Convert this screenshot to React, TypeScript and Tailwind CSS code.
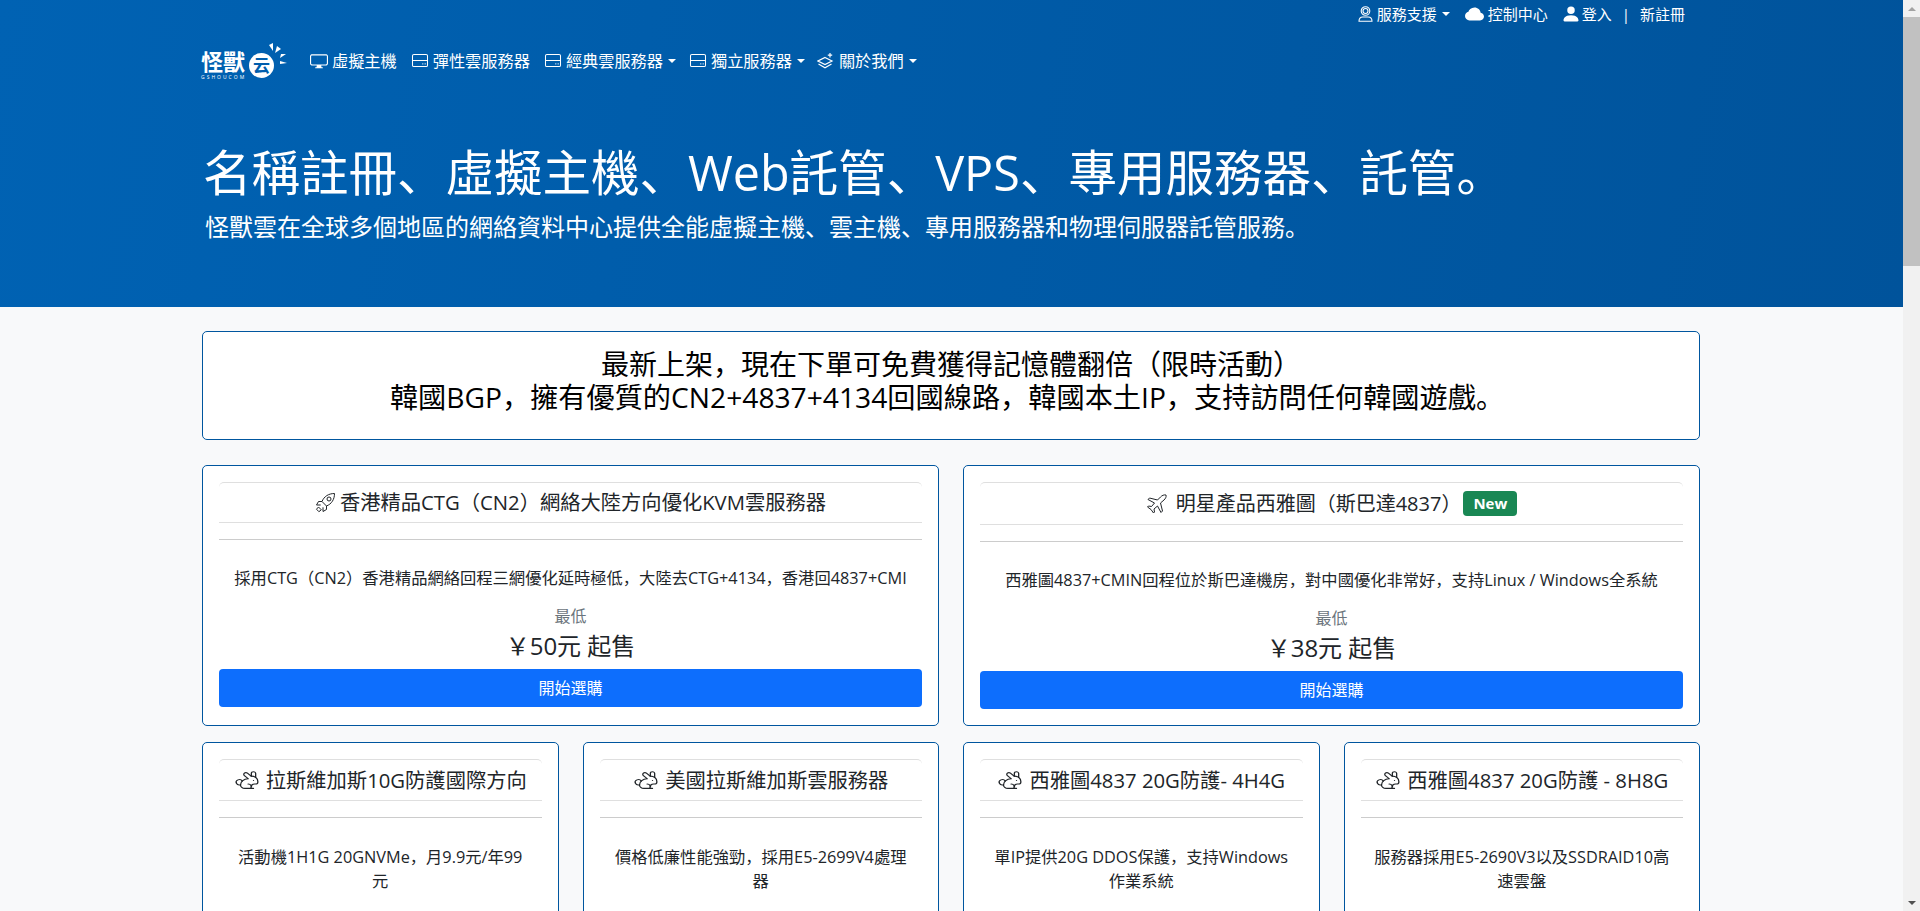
import React from "react";
import { BsDisplay, BsCloudFill, BsPersonFill } from "react-icons/bs";
import { Rabbit } from "lucide-react";

const FONT = "font-['Open_Sans','Noto_Sans_CJK_SC',sans-serif]";

function Caret() {
  return <span className="ml-[5px] inline-block h-0 w-0 border-x-[4px] border-t-[4px] border-x-transparent border-t-white" />;
}

function HddIcon() {
  return (
    <svg viewBox="0 0 18 16" className="h-[15px] w-[18px]" fill="none" stroke="currentColor" strokeWidth="1.1">
      <rect x="1" y="1.5" width="16" height="13" rx="1.5" />
      <path d="M1 8h16" />
      <path d="M11.5 11.5h1M14 11.5h1" strokeWidth="1.3" />
    </svg>
  );
}

function LayersIcon() {
  return (
    <svg viewBox="0 0 18 18" className="h-[18px] w-[18px]" fill="none" stroke="currentColor" strokeWidth="1.2">
      <path d="M8 5.5 15 9 8 12.5 1 9Z" />
      <path d="M1.5 12 8 15.8 14.5 12" />
      <path d="M13 1v4.5M10.8 3.2h4.4" />
    </svg>
  );
}

function SupportIcon() {
  return (
    <svg viewBox="0 0 15 16" className="h-[16px] w-[15px]" fill="none" stroke="currentColor" strokeWidth="1.1">
      <circle cx="7.5" cy="5" r="4.3" />
      <circle cx="7.5" cy="5" r="2.5" />
      <path d="M1 15.3c0-3 1.8-4.3 3.8-4.3h5.4c2 0 3.8 1.3 3.8 4.3Z" />
    </svg>
  );
}

function RocketIcon() {
  return (
    <svg viewBox="0 0 21 21" className="h-[21px] w-[21px]" fill="none" stroke="currentColor" strokeWidth="1" strokeLinejoin="round">
      <path d="M19.5 1.5C13.5 1.5 9 4.5 7 9.5l4.5 4.5c5-2 8-6.5 8-12.5Z" />
      <circle cx="14" cy="7" r="2" />
      <path d="M7 9.5H3.5L1.5 13H5.7M11.5 14v3.5L8 19.5v-4.2" />
      <path d="M3.5 15l2.8 2.8-2.4 1.9-2.4-2.5Z" />
    </svg>
  );
}

function PlaneIcon() {
  return (
    <svg viewBox="0 0 22 22" className="h-[22px] w-[22px]" fill="none" stroke="currentColor" strokeWidth="1" strokeLinejoin="round">
      <path d="M20 2C18 1.5 16 2.5 14.5 4L11.5 7 3.5 5 2 6.5 8.5 10 5.5 13.5 2.5 13 1.5 14 5 16.5 7.5 20 8.5 19 8 16 11.5 13 15 19.5 16.5 18 14.5 10 18 7C19.5 5.5 20.5 4 20 2Z" />
    </svg>
  );
}

function RabbitIcon() {
  return <Rabbit className="h-[21px] w-[26px]" strokeWidth={1.2} preserveAspectRatio="none" />;
}

function NavItem({
  icon,
  label,
  caret,
  className = "",
  iconClass = "w-[18px] mr-[4px]",
}: {
  icon: React.ReactNode;
  label: string;
  caret?: boolean;
  className?: string;
  iconClass?: string;
}) {
  return (
    <div className={`flex items-center ${className}`}>
      <span className={`flex justify-center ${iconClass}`}>{icon}</span>
      <span>{label}</span>
      {caret && <Caret />}
    </div>
  );
}

function Logo() {
  return (
    <div className="relative -ml-[1px] flex h-[36px] w-[85px] items-start pt-[8px] text-white">
      <div className="flex w-[46px] flex-col">
        <div className="text-[22px] leading-[20px] font-bold whitespace-nowrap">怪獸</div>
        <div className="mt-[3px] text-[5px] leading-[6px] tracking-[2px] whitespace-nowrap">GSHOUCOM</div>
      </div>
      <div className="mt-[2px] ml-[2px] flex h-[25px] w-[25px] items-center justify-center rounded-full bg-white text-[17px] leading-none font-bold text-[#005ead]">云</div>
      <svg className="absolute top-0 left-[66px] h-[26px] w-[20px]" viewBox="0 0 20 26" fill="#fff">
        <polygon points="2,2 6,0 6,8" />
        <polygon points="10,3 14,6 8,10" />
        <polygon points="14,11 19,11 13,15" />
        <polygon points="13,18 20,20 13,21" />
      </svg>
    </div>
  );
}

function Card({
  title,
  icon,
  desc,
  price,
  badge,
  className = "",
}: {
  title: string;
  icon: React.ReactNode;
  desc: React.ReactNode;
  price?: string;
  badge?: boolean;
  className?: string;
}) {
  return (
    <div className={`rounded-[5px] border border-[#00569f] bg-white p-4 text-center text-[#212529] ${className}`}>
      <div className={`flex items-center justify-center rounded-t-[5px] border-y border-[#dfdfdf] py-2 ${badge ? "text-[20px] leading-[24px]" : price ? "text-[20.3px] leading-[23px]" : "text-[20.3px] leading-[24px]"}`}>
        <span className={`flex ${badge ? "mr-[8px]" : price ? "mr-[4px]" : "mr-[6px]"}`}>{icon}</span>
        <span>{title}</span>
        {badge && <span className="ml-[2px] rounded-[4px] bg-[#198754] px-[10px] py-[3px] text-[15px] leading-[19px] font-bold text-white">New</span>}
      </div>
      <div className="mt-4 h-px bg-[#cccccc]" />
      <p className={`text-[16.3px] leading-[24px] ${price ? "mt-[26px]" : "mt-[27px] px-[10px]"}`}>{desc}</p>
      {price && (
        <>
          <div className="mt-[14px] text-[16px] leading-[24px] text-[#6c757d]">最低</div>
          <div className="mt-[3px] text-[24px] leading-[29px]">{price}</div>
          <div className="mt-[9px] flex h-[38px] items-center justify-center rounded-[4px] bg-[#0d6efd] text-[16px] text-white">開始選購</div>
        </>
      )}
    </div>
  );
}

function Scrollbar() {
  return (
    <div className="flex h-[911px] w-[17px] shrink-0 flex-col bg-[#f1f1f1]">
      <div className="flex h-[17px] items-center justify-center">
        <span className="h-0 w-0 border-x-[4px] border-b-[4px] border-x-transparent border-b-[#a3a3a3]" />
      </div>
      <div className="h-[249px] bg-[#c1c1c1]" />
      <div className="flex-1" />
      <div className="flex h-[17px] items-center justify-center">
        <span className="h-0 w-0 border-x-[4px] border-t-[4px] border-x-transparent border-t-[#505050]" />
      </div>
    </div>
  );
}

export default function App() {
  const rabbit = <RabbitIcon />;
  return (
    <div className={`flex h-[911px] overflow-hidden bg-[#f8f9fa] ${FONT}`}>
      <div className="min-w-0 flex-1">
        <header className="h-[307px] bg-[linear-gradient(100deg,#0062b3,#00539b)] text-white">
          <div className="ml-[202px] w-[1498px]">
            <div className="flex h-[28px] items-center justify-end pr-[15px] text-[15px]">
              <NavItem icon={<SupportIcon />} label="服務支援" caret iconClass="w-[15px] mr-[4px]" />
              <NavItem icon={<BsCloudFill className="text-[19px]" />} label="控制中心" className="ml-[15px]" iconClass="w-[19px] mr-[4px]" />
              <NavItem icon={<BsPersonFill className="shrink-0 text-[20px]" />} label="登入" className="ml-[16px]" iconClass="w-[14px] mr-[4px]" />
              <span className="mx-[10px]">|</span>
              <span>新註冊</span>
            </div>
            <div className="mt-[15px] flex h-[36px] items-center text-[16.2px]">
              <Logo />
              <div className="ml-[24px] flex items-center">
                <NavItem icon={<BsDisplay className="text-[18px]" />} label="虛擬主機" />
                <NavItem icon={<HddIcon />} label="彈性雲服務器" className="ml-[14px]" />
                <NavItem icon={<HddIcon />} label="經典雲服務器" caret className="ml-[14px]" />
                <NavItem icon={<HddIcon />} label="獨立服務器" caret className="ml-[13px]" />
                <NavItem icon={<LayersIcon />} label="關於我們" caret className="ml-[12px]" />
              </div>
            </div>
            <h1 className="mt-[61px] ml-[1px] text-[48.5px] leading-[64px] font-normal whitespace-nowrap">名稱註冊、虛擬主機、Web託管、VPS、專用服務器、託管。</h1>
            <p className="mt-[7px] ml-[3px] text-[24px] leading-[32px]">怪獸雲在全球多個地區的網絡資料中心提供全能虛擬主機、雲主機、專用服務器和物理伺服器託管服務。</p>
          </div>
        </header>
        <main className="ml-[202px] w-[1498px]">
          <div className="mt-[24px] h-[109px] rounded-[5px] border border-[#00569f] bg-white pt-[16px] text-center text-[28px] leading-[33px] text-black">
            <div>最新上架，現在下單可免費獲得記憶體翻倍（限時活動）</div>
            <div className="pr-[8px] text-[28.2px]">韓國BGP，擁有優質的CN2+4837+4134回國線路，韓國本土IP，支持訪問任何韓國遊戲。</div>
          </div>
          <div className="mt-[25px] grid grid-cols-2 gap-x-6">
            <Card icon={<RocketIcon />} title="香港精品CTG（CN2）網絡大陸方向優化KVM雲服務器" desc="採用CTG（CN2）香港精品網絡回程三網優化延時極低，大陸去CTG+4134，香港回4837+CMI" price="￥50元 起售" />
            <Card icon={<PlaneIcon />} title="明星產品西雅圖（斯巴達4837）" badge desc="西雅圖4837+CMIN回程位於斯巴達機房，對中國優化非常好，支持Linux / Windows全系統" price="￥38元 起售" />
          </div>
          <div className="mt-4 grid grid-cols-4 gap-x-6">
            <Card icon={rabbit} title="拉斯維加斯10G防護國際方向" desc={<>活動機1H1G 20GNVMe，月9.9元/年99<br />元</>} className="h-[260px]" />
            <Card icon={rabbit} title="美國拉斯維加斯雲服務器" desc="價格低廉性能強勁，採用E5-2699V4處理器" className="h-[260px]" />
            <Card icon={rabbit} title="西雅圖4837 20G防護- 4H4G" desc="單IP提供20G DDOS保護，支持Windows作業系統" className="h-[260px]" />
            <Card icon={rabbit} title="西雅圖4837 20G防護 - 8H8G" desc="服務器採用E5-2690V3以及SSDRAID10高速雲盤" className="h-[260px]" />
          </div>
        </main>
      </div>
      <Scrollbar />
    </div>
  );
}
